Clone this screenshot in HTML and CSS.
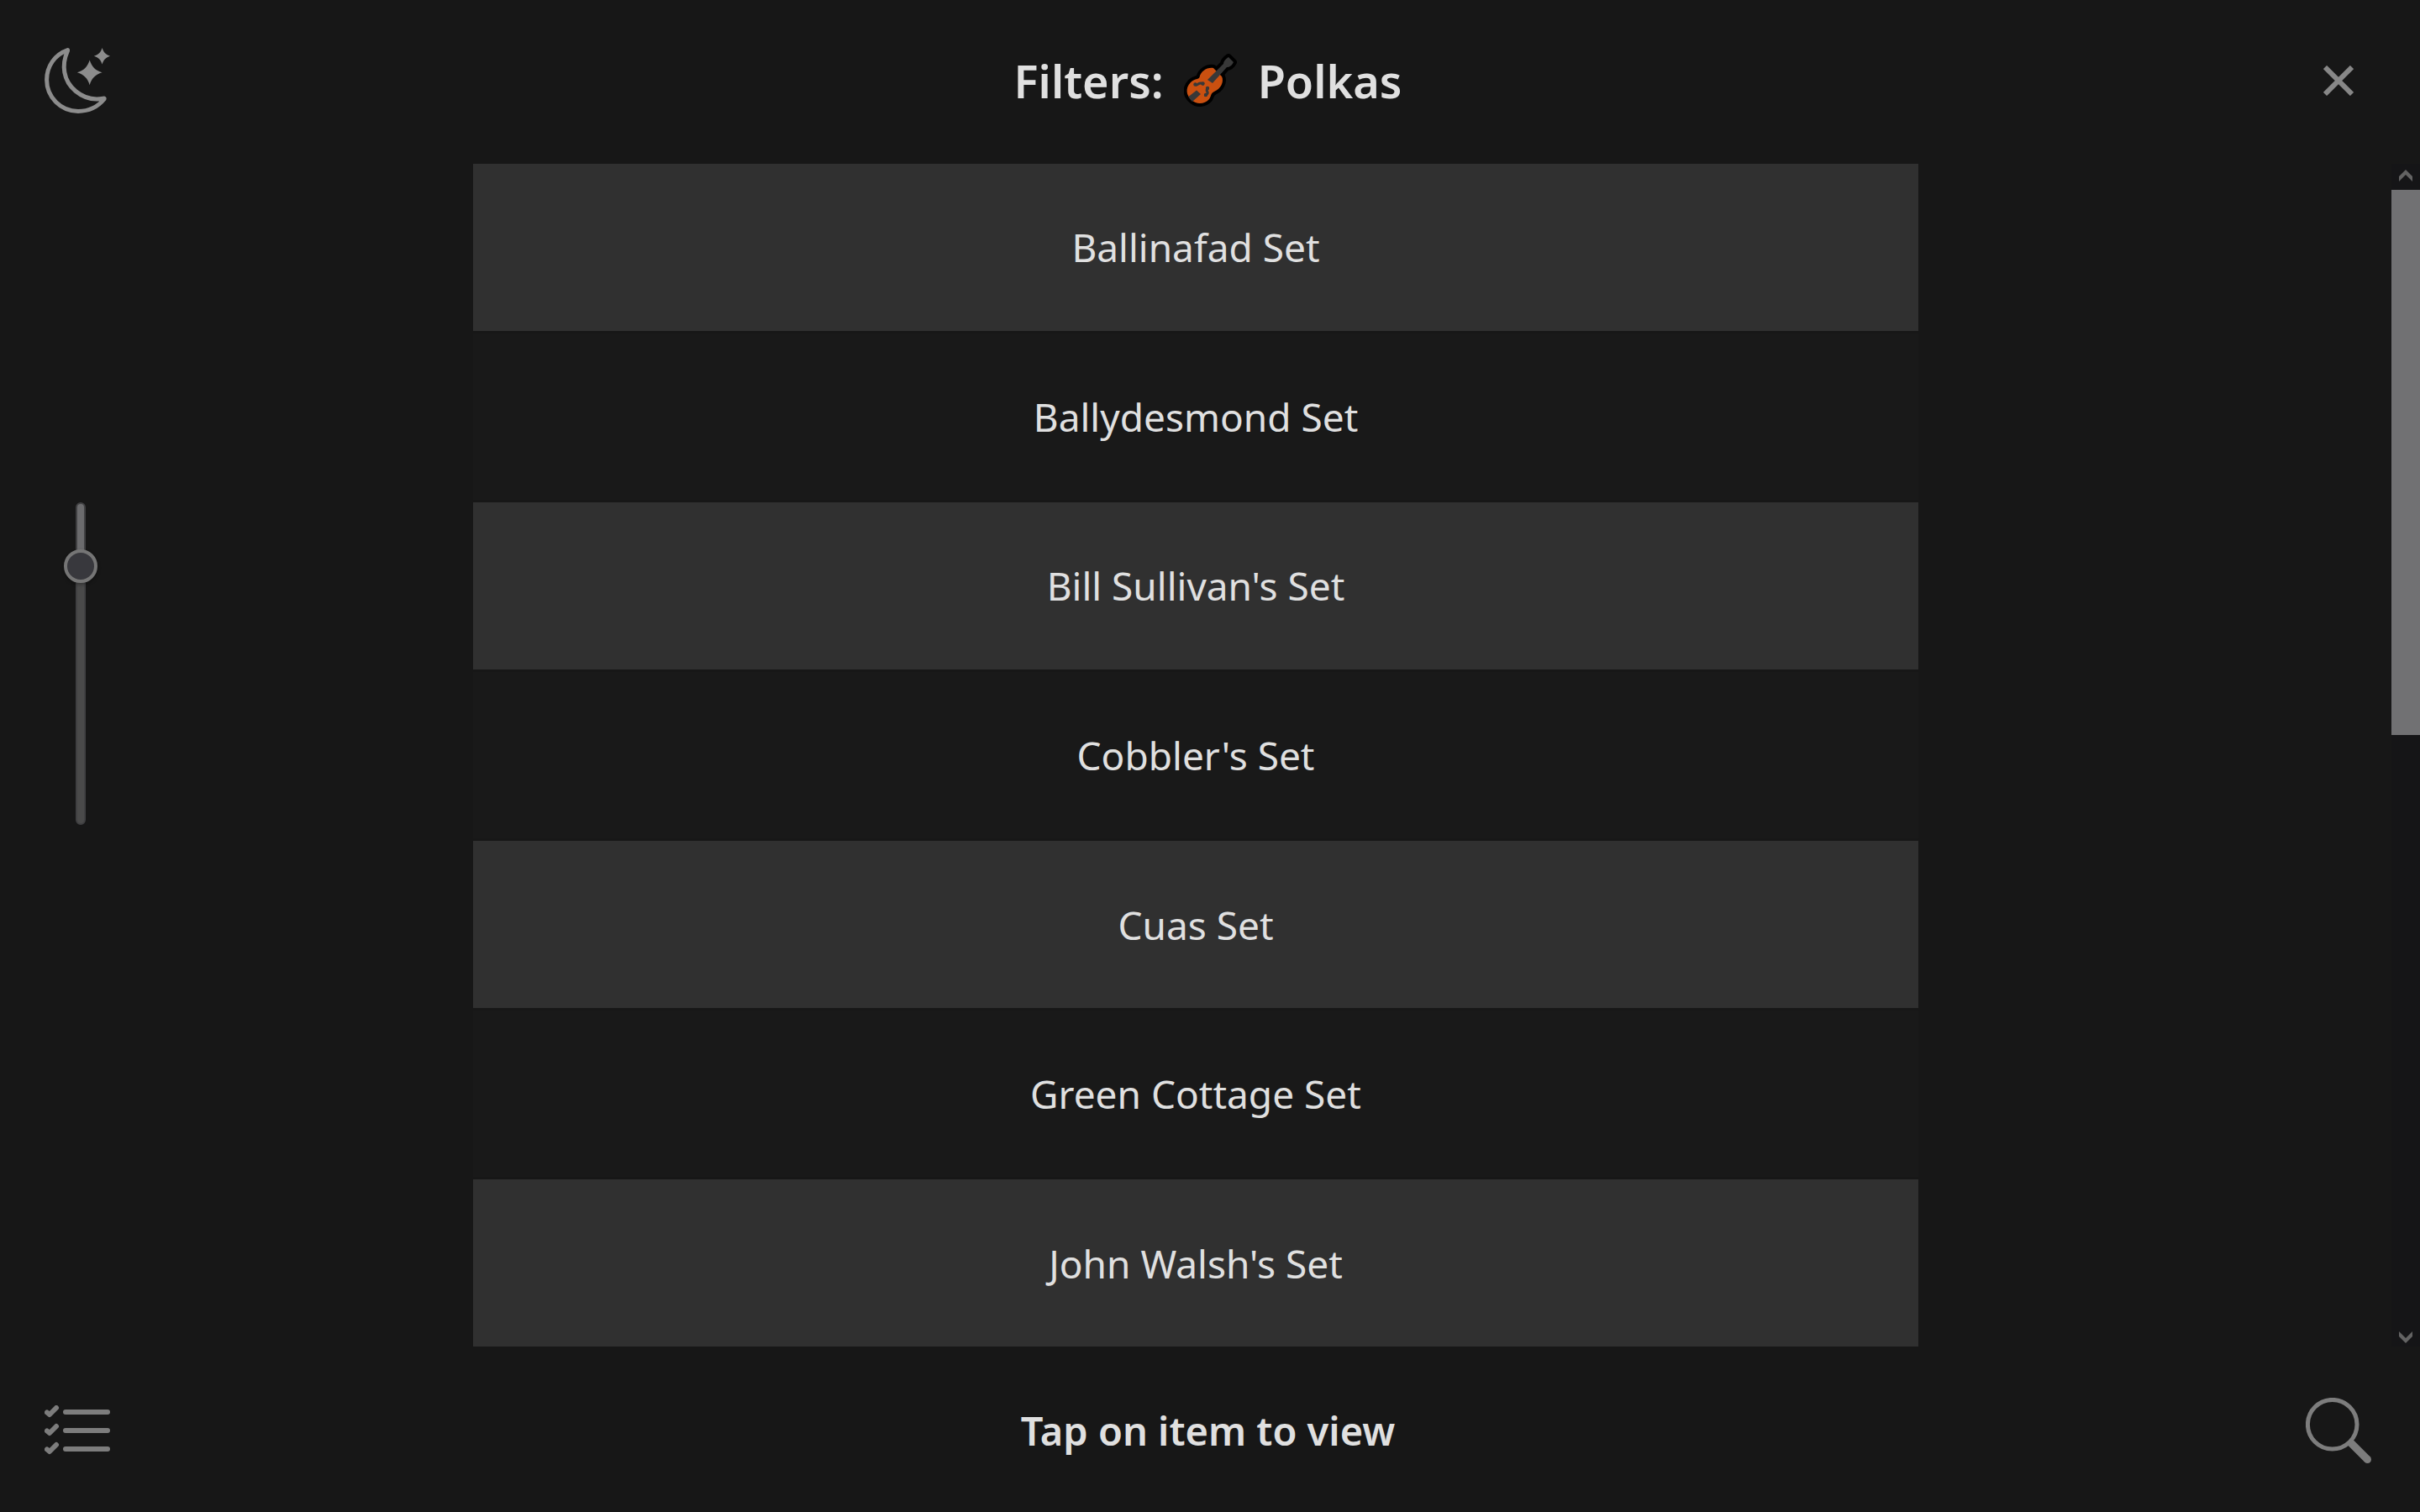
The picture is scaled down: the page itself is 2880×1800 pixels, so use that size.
FILE: index.html
```html
<!DOCTYPE html>
<html lang="en">
<head>
<meta charset="utf-8">
<title>Filters: Polkas</title>
<link rel="stylesheet" href="styles.css">
</head>
<body>
<header class="bar header">
  <button class="icon-button moon" type="button" aria-label="Switch theme">
    <svg width="78" height="78" viewBox="0 0 78 78">
      <path class="line" d="M27.500 2.600C12 8 2.600 22 2.600 38A37.400 37.400 0 0 0 40 75.400C53 75.400 64 69.500 71 61Q71.500 59.500 69.500 60.300C57 62.500 46 59 37 51.500C22 39 20 20 27.500 3.500Z"/>
      <path class="solid" d="M53.700 14.500C56.200 22.500 60.500 26.800 68.500 29.300C60.500 31.800 56.200 36.200 53.700 44.200C51.200 36.200 46.900 31.800 38.900 29.300C46.900 26.800 51.200 22.500 53.700 14.500Z"/>
      <path class="solid" d="M68.600 0C70.200 5.200 73 8.100 78 9.700C73 11.300 70.200 14.200 68.600 19.500C67 14.200 64.200 11.300 58.900 9.700C64.200 8.100 67 5.200 68.600 0Z"/>
    </svg>
  </button>
  <h1 class="title"><span>Filters:</span>
    <svg width="64" height="64" viewBox="0 0 64 64" aria-hidden="true">
      <g stroke="#000" stroke-width="8" stroke-linejoin="round">
        <path fill="#ca5010" d="M35 17C27 16 20 21 18.500 28C17 31 13 29 8 34C1 41 3 50 9 55C15 61 25 60 30 54C33 50 31 48 36 45C44 42 48 33 45 27Z"/>
        <path fill="#383838" d="M28 31L47 12Q47 8 53 4L59 10Q56 16 51 16L34 35Z"/>
      </g>
      <path fill="#ca5010" d="M35 17C27 16 20 21 18.500 28C17 31 13 29 8 34C1 41 3 50 9 55C15 61 25 60 30 54C33 50 31 48 36 45C44 42 48 33 45 27Z"/>
      <path fill="#383838" d="M28 31L47 12Q47 8 53 4L59 10Q56 16 51 16L34 35Z"/>
      <path fill="#383838" d="M5.500 51L15 43.500L20 48L10 57Q7 54.500 5.500 51Z"/>
      <path fill="none" stroke="#383838" stroke-width="3" stroke-linecap="round" d="M13.500 36.500Q15 38 17 36Q20 34 22.500 36M28.500 41Q26 43 28 45.500Q29 47.500 25.500 49.500"/>
      <g fill="#383838"><circle cx="13.500" cy="36.500" r="2.200"/><circle cx="22.500" cy="35.500" r="2.200"/><circle cx="28" cy="41" r="2.200"/><circle cx="26" cy="49" r="2.200"/></g>
    </svg>
    <span>Polkas</span></h1>
  <button class="icon-button close" type="button" aria-label="Close">
    <svg width="36" height="36" viewBox="0 0 36 36"><path class="cross" d="M2 2L34 34M34 2L2 34"/></svg>
  </button>
</header>
<main class="content">
  <div class="side">
    <input class="zoom" type="range" min="0" max="100" value="16" aria-label="Text size">
  </div>
  <div class="list">
    <button class="item" type="button">Ballinafad Set</button>
    <button class="item" type="button">Ballydesmond Set</button>
    <button class="item" type="button">Bill Sullivan's Set</button>
    <button class="item" type="button">Cobbler's Set</button>
    <button class="item" type="button">Cuas Set</button>
    <button class="item" type="button">Green Cottage Set</button>
    <button class="item" type="button">John Walsh's Set</button>
  </div>
  <div class="scrollbar" aria-hidden="true">
    <svg width="16" height="14" viewBox="0 0 16 14"><path d="M0 8L8 0L16 8V14L8 6L0 14Z"/></svg>
    <div class="thumb"></div>
    <svg width="16" height="14" viewBox="0 0 16 14"><path d="M0 6L8 14L16 6V0L8 8L0 0Z"/></svg>
  </div>
</main>
<footer class="bar footer">
  <button class="icon-button" type="button" aria-label="Show list">
    <svg width="78" height="60" viewBox="0 0 78 60">
      <path class="line thick" d="M25 8H75M25 30H75M25 52H75M3 8.500L6 11L14 3M3 30.500L6 33L14 25M3 52.500L6 55L14 47"/>
    </svg>
  </button>
  <p class="status">Tap on item to view</p>
  <button class="icon-button" type="button" aria-label="Search">
    <svg width="78" height="78" viewBox="0 0 78 78">
      <circle class="line" cx="31.700" cy="31.700" r="29.300"/>
      <path class="handle" d="M53.500 53.500L73.500 73.500"/><circle class="solid" cx="73.500" cy="73.500" r="4.500"/>
    </svg>
  </button>
</footer>
</body>
</html>
```
FILE: styles.css
```css
* {
  box-sizing: border-box;
}

body {
  margin: 0;
  min-height: 100vh;
  display: grid;
  grid-template-rows: 195px 1fr 197px;
  background: #171717;
  color: #e0e0e0;
  font-family: "Trebuchet MS", "Noto Sans", sans-serif;
}

button {
  border: 0;
  padding: 0;
  background: none;
  color: inherit;
  font: inherit;
}

.bar {
  display: grid;
  grid-template-columns: 78px 1fr 78px;
  align-items: center;
}

.header {
  padding: 0 58px 3px 53px;
}

.footer {
  padding: 3px 58px 0 53px;
}

.icon-button {
  display: flex;
  align-items: center;
  justify-content: center;
  height: 78px;
  color: #7d7d7d;
}

.moon {
  color: #8c8c8c;
}

.close {
  color: #878787;
}

.line {
  fill: none;
  stroke: currentColor;
  stroke-width: 5;
  stroke-linecap: round;
  stroke-linejoin: round;
}

.thick {
  stroke-width: 6;
}

.solid {
  fill: currentColor;
}

.cross {
  stroke: currentColor;
  stroke-width: 6;
}

.handle {
  stroke: currentColor;
  stroke-width: 9;
}

.title {
  display: flex;
  align-items: center;
  justify-content: center;
  gap: 24px;
  margin: 0;
  font-size: 54px;
  font-weight: 600;
}

.status {
  margin: 0;
  text-align: center;
  font-size: 47px;
  font-weight: 600;
}

.content {
  display: grid;
  grid-template-columns: 1fr minmax(0, 1720px) 1fr 34px;
}

.side {
  padding: 403px 0 0 76px;
}

.zoom {
  display: block;
  appearance: none;
  writing-mode: vertical-lr;
  width: 40px;
  height: 384px;
  margin: 0;
  background: none;
}

.zoom::-webkit-slider-runnable-track {
  width: 12px;
  height: 384px;
  border: 2px solid #404042;
  border-radius: 6px;
  background: linear-gradient(#6b6b6d 20%, #4a4a4a 20%);
}

.zoom::-webkit-slider-thumb {
  appearance: none;
  width: 40px;
  height: 40px;
  margin-left: -16px;
  border: 4px solid #757575;
  border-radius: 50%;
  background: #38383d;
  box-shadow: 0 2px 4px #00000055;
}

.list {
  grid-column: 2;
  display: grid;
  grid-auto-rows: 1fr;
  gap: 3px;
}

.item {
  min-height: 120px;
  background: #303030;
  font-size: 46px;
}

.item:nth-child(even) {
  background: #191919;
}

.scrollbar {
  grid-column: 4;
  display: grid;
  grid-template-rows: 28px 1fr 22px;
  row-gap: 3px;
  align-items: center;
  justify-items: center;
  background: #151517;
  fill: #636363;
}

.thumb {
  align-self: start;
  width: 100%;
  height: 48%;
  background: #717173;
}
```
